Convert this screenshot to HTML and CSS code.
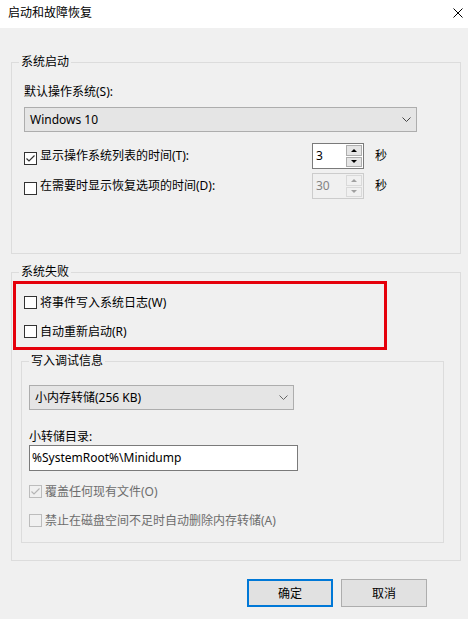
FILE: index.html
```html
<!DOCTYPE html>
<html lang="zh-CN">
<head>
<meta charset="utf-8">
<title>启动和故障恢复</title>
<link rel="stylesheet" href="styles.css">
</head>
<body>
<div class="window">
  <div class="titlebar">
    <span class="title">启动和故障恢复</span>
    <svg class="close" width="10" height="10" viewBox="0 0 10 10"><path d="M0.5 0.5 L9.5 9.5 M9.5 0.5 L0.5 9.5" stroke="#000" stroke-width="1" fill="none"/></svg>
  </div>
  <div class="content">
    <div class="group group-startup">
      <span class="legend">系统启动</span>
      <div class="label">默认操作系统(S):</div>
      <div class="combo combo-os">
        <span>Windows 10</span>
        <svg class="chev" width="9" height="5" viewBox="0 0 9 5"><path d="M0.5 0.5 L4.5 4.5 L8.5 0.5" stroke="#444" stroke-width="1" fill="none"/></svg>
      </div>
      <div class="timerow">
        <label class="check">
          <span class="box"><svg width="11" height="11" viewBox="0 0 11 11"><path d="M1.5 5.5 L4 8 L9.5 2.5" stroke="#333" stroke-width="1.2" fill="none"/></svg></span>
          <span>显示操作系统列表的时间(T):</span>
        </label>
        <div class="spin">
          <span class="spin-val">3</span>
          <span class="spin-btns">
            <span class="sb"><span class="tri-up"></span></span>
            <span class="sb"><span class="tri-down"></span></span>
          </span>
        </div>
        <span class="unit">秒</span>
      </div>
      <div class="timerow">
        <label class="check">
          <span class="box"></span>
          <span>在需要时显示恢复选项的时间(D):</span>
        </label>
        <div class="spin disabled">
          <span class="spin-val">30</span>
          <span class="spin-btns">
            <span class="sb"><span class="tri-up"></span></span>
            <span class="sb"><span class="tri-down"></span></span>
          </span>
        </div>
        <span class="unit">秒</span>
      </div>
    </div>

    <div class="group group-failure">
      <span class="legend">系统失败</span>
      <div class="highlight">
        <label class="check">
          <span class="box"></span>
          <span>将事件写入系统日志(W)</span>
        </label>
        <label class="check">
          <span class="box"></span>
          <span>自动重新启动(R)</span>
        </label>
      </div>
      <div class="group group-debug">
        <span class="legend">写入调试信息</span>
        <div class="combo combo-dump">
          <span>小内存转储(256 KB)</span>
          <svg class="chev" width="9" height="5" viewBox="0 0 9 5"><path d="M0.5 0.5 L4.5 4.5 L8.5 0.5" stroke="#666" stroke-width="1" fill="none"/></svg>
        </div>
        <div class="label label-dir">小转储目录:</div>
        <div class="textbox">%SystemRoot%\Minidump</div>
        <label class="check disabled check-o">
          <span class="box"><svg width="11" height="11" viewBox="0 0 11 11"><path d="M1.5 5.5 L4 8 L9.5 2.5" stroke="#b5b5b5" stroke-width="1.2" fill="none"/></svg></span>
          <span>覆盖任何现有文件(O)</span>
        </label>
        <label class="check disabled check-a">
          <span class="box"></span>
          <span>禁止在磁盘空间不足时自动删除内存转储(A)</span>
        </label>
      </div>
    </div>

    <div class="buttons">
      <button class="btn default">确定</button>
      <button class="btn">取消</button>
    </div>
  </div>
</div>
</body>
</html>
```

FILE: styles.css
```css
html, body {
  margin: 0;
  padding: 0;
}
body {
  width: 468px;
  height: 619px;
  overflow: hidden;
}
.window {
  width: 468px;
  height: 619px;
  background: #f0f0f0;
  font-family: "Noto Sans", "Noto Sans CJK SC", sans-serif;
  font-size: 12px;
  line-height: 16px;
  color: #000;
  box-sizing: border-box;
}
.titlebar {
  height: 28px;
  background: #fff;
  display: flex;
  justify-content: space-between;
  align-items: flex-start;
  padding: 5px 5px 0 8px;
  box-sizing: border-box;
}
.title {
  line-height: 16px;
}
.close {
  margin-top: 3px;
}
.content {
  padding: 34px 7px 0 11px;
}
.group {
  position: relative;
  border: 1px solid #dcdcdc;
  box-sizing: border-box;
}
.legend {
  position: absolute;
  top: -9px;
  left: 7px;
  padding: 0 2px;
  background: #f0f0f0;
  line-height: 16px;
  color: #000;
}
.group-startup {
  width: 450px;
  height: 192px;
  padding: 21px 0 0 12px;
}
.label {
  line-height: 16px;
}
.combo {
  margin-top: 7px;
  height: 25px;
  background: #e5e5e5;
  border: 1px solid #adadad;
  box-sizing: border-box;
  display: flex;
  align-items: center;
  justify-content: space-between;
  padding: 0 5px 0 5px;
}
.combo-os {
  width: 393px;
}
.timerow {
  display: grid;
  grid-template-columns: 288px 52px auto;
  align-items: center;
  height: 26px;
  margin-top: 4px;
}
.combo-os + .timerow {
  margin-top: 11px;
}
.check {
  display: flex;
  align-items: center;
  gap: 3px;
  height: 17px;
}
.box {
  width: 13px;
  height: 13px;
  border: 1px solid #333;
  background: #fff;
  box-sizing: border-box;
  display: flex;
  align-items: center;
  justify-content: center;
  flex: none;
}
.timerow .check .box {
  margin-top: 5px;
}
.spin {
  width: 52px;
  height: 26px;
  border: 1px solid #7a7a7a;
  background: #fff;
  box-sizing: border-box;
  display: flex;
}
.spin-val {
  flex: 1;
  padding-left: 3px;
  line-height: 24px;
}
.spin-btns {
  width: 17px;
  display: flex;
  flex-direction: column;
  gap: 1px;
  padding: 1px 1px 1px 0;
  box-sizing: border-box;
}
.sb {
  flex: 1;
  border: 1px solid #adadad;
  background: #e5e5e5;
  display: flex;
  align-items: center;
  justify-content: center;
}
.tri-up {
  width: 0;
  height: 0;
  border-left: 3px solid transparent;
  border-right: 3px solid transparent;
  border-bottom: 3px solid #000;
}
.tri-down {
  width: 0;
  height: 0;
  border-left: 3px solid transparent;
  border-right: 3px solid transparent;
  border-top: 3px solid #000;
}
.spin.disabled {
  border-color: #cccccc;
  background: #f0f0f0;
  color: #838383;
}
.spin.disabled .sb {
  border-color: #d9d9d9;
  background: #f0f0f0;
}
.spin.disabled .tri-up {
  border-bottom-color: #a0a0a0;
}
.spin.disabled .tri-down {
  border-top-color: #a0a0a0;
}
.unit {
  padding-left: 11px;
}
.group-failure {
  margin-top: 18px;
  width: 450px;
  height: 289px;
  padding-top: 8px;
}
.highlight {
  margin-left: 1px;
  width: 374px;
  height: 69px;
  border: 3px solid #e5000b;
  box-sizing: border-box;
  padding: 10px 0 0 8px;
  display: flex;
  flex-direction: column;
  gap: 12px;
}
.group-debug {
  margin: 11px 0 0 9px;
  width: 423px;
  height: 182px;
  padding: 23px 0 0 7px;
}
.combo-dump {
  margin-top: 0;
  width: 265px;
}
.label-dir {
  margin-top: 19px;
}
.textbox {
  width: 269px;
  height: 26px;
  border: 1px solid #7a7a7a;
  background: #fff;
  box-sizing: border-box;
  padding-left: 2px;
  line-height: 24px;
}
.check.disabled {
  color: #6d6d6d;
}
.check.disabled .box {
  border-color: #bcbcbc;
  background: #f0f0f0;
}
.check-o {
  margin-top: 12px;
}
.check-a {
  margin-top: 12px;
}
.buttons {
  display: flex;
  justify-content: flex-end;
  gap: 8px;
  margin-top: 18px;
  padding-right: 34px;
}
.btn {
  width: 86px;
  height: 28px;
  background: #e1e1e1;
  border: 1px solid #adadad;
  font-family: "Noto Sans", "Noto Sans CJK SC", sans-serif;
  font-size: 12px;
  color: #000;
  padding: 0;
  margin: 0;
  box-sizing: border-box;
}
.btn.default {
  border: 2px solid #0078d7;
}
```
